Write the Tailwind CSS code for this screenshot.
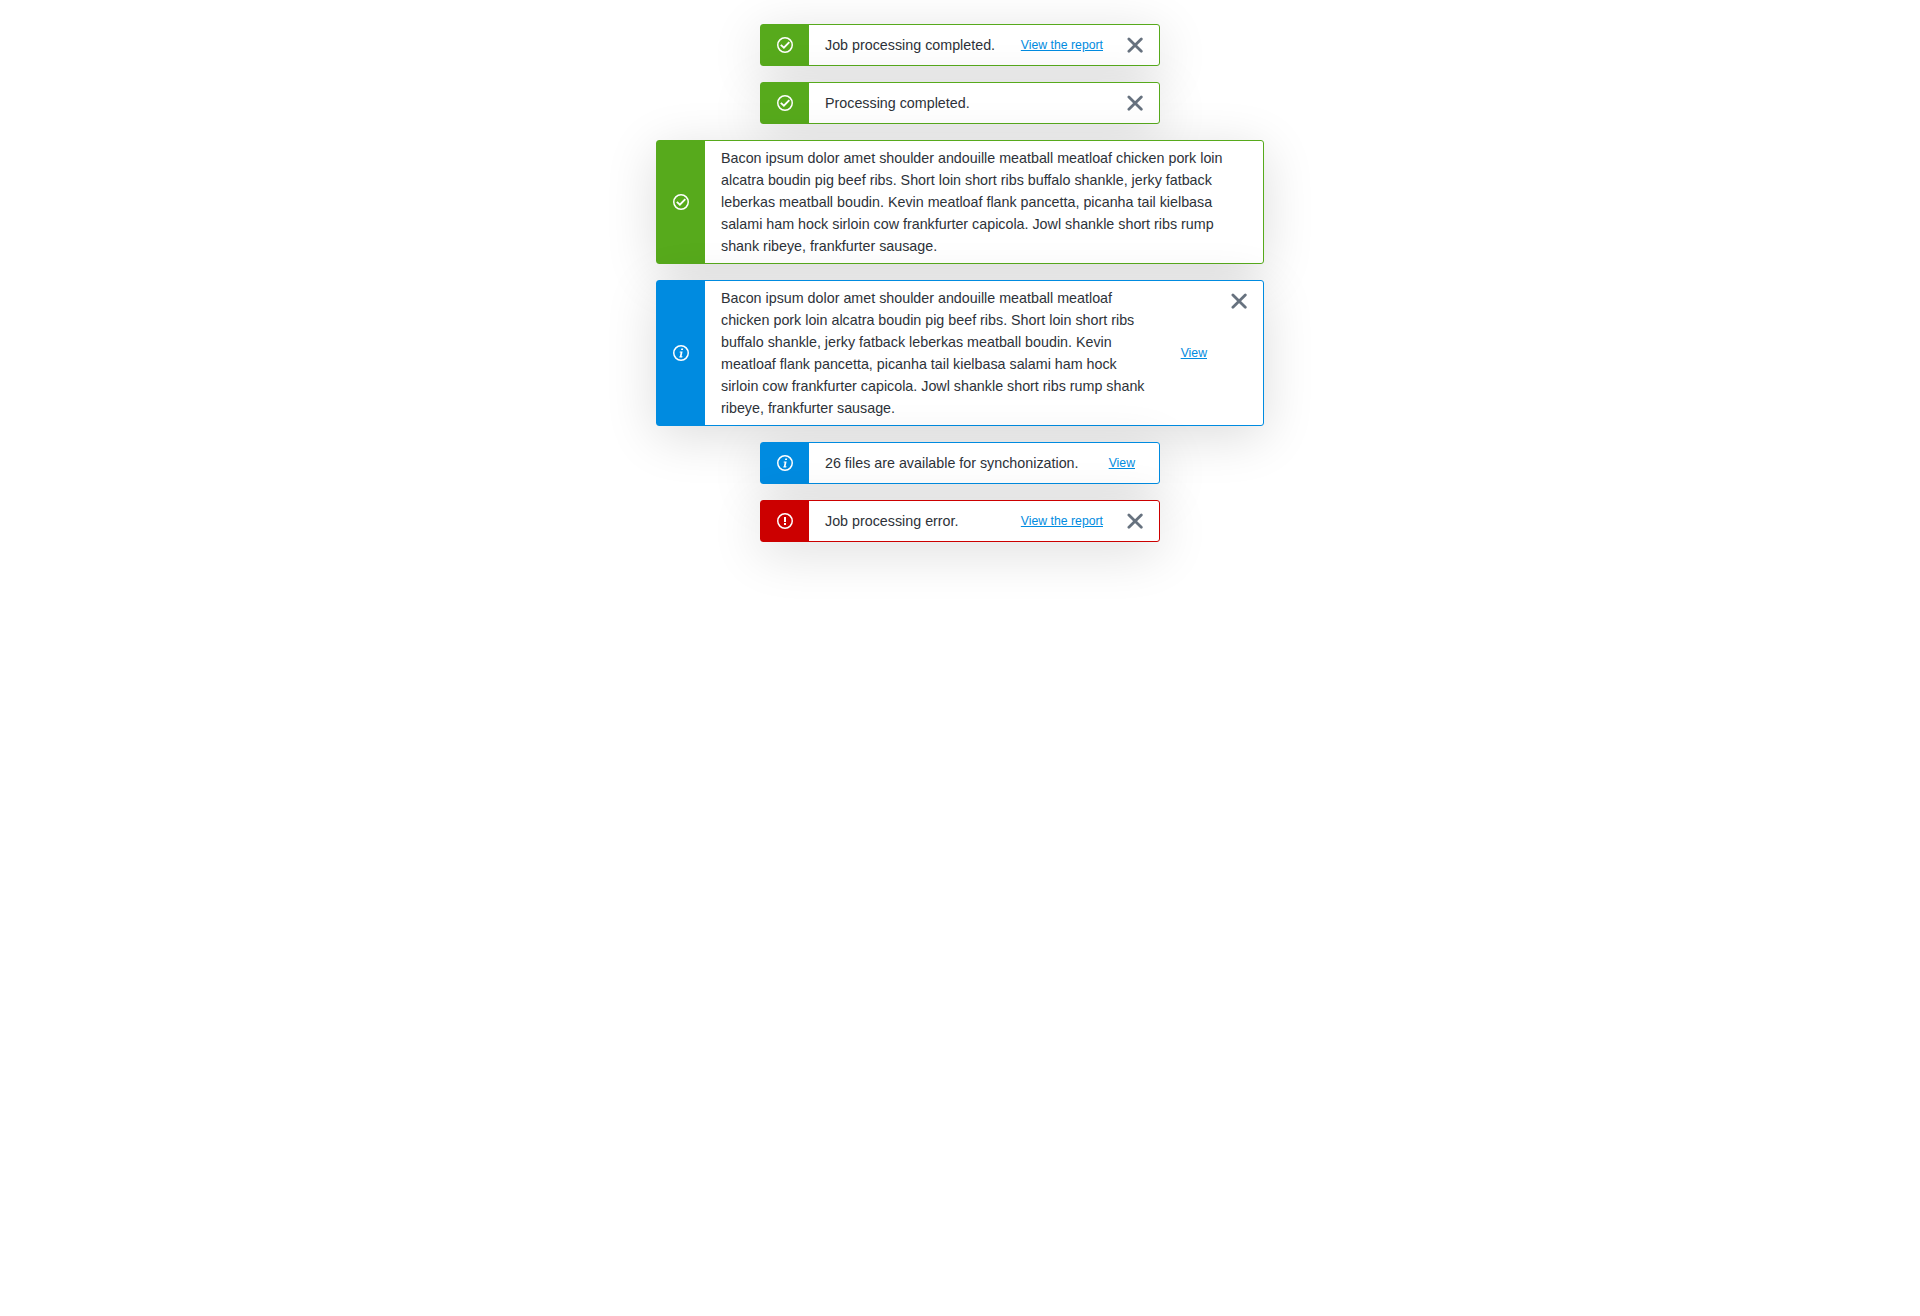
<!DOCTYPE html>
<html lang="en">
<head>
<meta charset="utf-8">
<title>Notifications</title>
<script src="https://cdn.jsdelivr.net/npm/@tailwindcss/browser@4"></script>
</head>
<body class="min-h-screen bg-white font-['Liberation_Sans',Arial,sans-serif] text-[14.3px] leading-[22px] text-[#2d3239]">
<svg class="hidden">
  <symbol id="check" viewBox="0 0 16 16"><circle cx="8" cy="8" r="7.25" fill="none" stroke="currentColor" stroke-width="1.5"/><path d="M3.8 7.9 6.9 10.7 12.3 5.2" fill="none" stroke="currentColor" stroke-width="1.9"/></symbol>
  <symbol id="info" viewBox="0 0 16 16"><circle cx="8" cy="8" r="7.25" fill="none" stroke="currentColor" stroke-width="1.5"/><path d="M8.3 3.4h1.9l-.3 1.6H8zM6.8 6.4h2.8l-1 4.9h.9l-.3 1.2H6.3l.2-1.2h.4l.7-3.7h-1z" fill="currentColor"/></symbol>
  <symbol id="error" viewBox="0 0 16 16"><circle cx="8" cy="8" r="7.25" fill="none" stroke="currentColor" stroke-width="1.5"/><path d="M7 4h2v5H7zM7 10h2v2H7z" fill="currentColor"/></symbol>
  <symbol id="close" viewBox="0 0 16 16"><path d="M1.9 1.9 14.3 14.3M14.3 1.9 1.9 14.3" fill="none" stroke="currentColor" stroke-width="2.8" stroke-linecap="round"/></symbol>
</svg>
<main class="flex flex-col items-center gap-4 pt-6">
  <section class="relative flex min-h-[42px] w-[400px] rounded-[3px] border border-[#57aa1c] bg-white shadow-[0_10px_52px_rgba(0,0,0,0.14)]">
    <div class="flex w-12 shrink-0 items-center justify-center bg-[#57aa1c] text-white"><svg class="size-4"><use href="#check"/></svg></div>
    <p class="grow self-center py-1.5 pl-4 pr-4">Job processing completed.</p>
    <a class="mr-6 shrink-0 self-center text-[12.25px] leading-4 text-[#008be0] underline">View the report</a>
    <button class="mr-4 mt-3 size-4 shrink-0 text-[#67727f]"><svg class="size-4"><use href="#close"/></svg></button>
  </section>
  <section class="relative flex min-h-[42px] w-[400px] rounded-[3px] border border-[#57aa1c] bg-white shadow-[0_10px_52px_rgba(0,0,0,0.14)]">
    <div class="flex w-12 shrink-0 items-center justify-center bg-[#57aa1c] text-white"><svg class="size-4"><use href="#check"/></svg></div>
    <p class="grow self-center py-1.5 pl-4 pr-4">Processing completed.</p>
    <button class="mr-4 mt-3 size-4 shrink-0 text-[#67727f]"><svg class="size-4"><use href="#close"/></svg></button>
  </section>
  <section class="relative flex min-h-[42px] w-[608px] rounded-[3px] border border-[#57aa1c] bg-white shadow-[0_10px_52px_rgba(0,0,0,0.14)]">
    <div class="flex w-12 shrink-0 items-center justify-center bg-[#57aa1c] text-white"><svg class="size-4"><use href="#check"/></svg></div>
    <p class="grow self-center py-1.5 pl-4 pr-4">Bacon ipsum dolor amet shoulder andouille meatball meatloaf chicken pork loin alcatra boudin pig beef ribs. Short loin short ribs buffalo shankle, jerky fatback leberkas meatball boudin. Kevin meatloaf flank pancetta, picanha tail kielbasa salami ham hock sirloin cow frankfurter capicola. Jowl shankle short ribs rump shank ribeye, frankfurter sausage.</p>
  </section>
  <section class="relative flex min-h-[42px] w-[608px] rounded-[3px] border border-[#008be0] bg-white shadow-[0_10px_52px_rgba(0,0,0,0.14)]">
    <div class="flex w-12 shrink-0 items-center justify-center bg-[#008be0] text-white"><svg class="size-4"><use href="#info"/></svg></div>
    <p class="grow self-center py-1.5 pl-4 pr-6">Bacon ipsum dolor amet shoulder andouille meatball meatloaf chicken pork loin alcatra boudin pig beef ribs. Short loin short ribs buffalo shankle, jerky fatback leberkas meatball boudin. Kevin meatloaf flank pancetta, picanha tail kielbasa salami ham hock sirloin cow frankfurter capicola. Jowl shankle short ribs rump shank ribeye, frankfurter sausage.</p>
    <a class="mr-6 shrink-0 self-center text-[12.25px] leading-4 text-[#008be0] underline">View</a>
    <button class="mr-4 mt-3 size-4 shrink-0 text-[#67727f]"><svg class="size-4"><use href="#close"/></svg></button>
  </section>
  <section class="relative flex min-h-[42px] w-[400px] rounded-[3px] border border-[#008be0] bg-white shadow-[0_10px_52px_rgba(0,0,0,0.14)]">
    <div class="flex w-12 shrink-0 items-center justify-center bg-[#008be0] text-white"><svg class="size-4"><use href="#info"/></svg></div>
    <p class="grow self-center py-1.5 pl-4 pr-4">26 files are available for synchonization.</p>
    <a class="mr-6 shrink-0 self-center text-[12.25px] leading-4 text-[#008be0] underline">View</a>
  </section>
  <section class="relative flex min-h-[42px] w-[400px] rounded-[3px] border border-[#cc0000] bg-white shadow-[0_10px_52px_rgba(0,0,0,0.14)]">
    <div class="flex w-12 shrink-0 items-center justify-center bg-[#cc0000] text-white"><svg class="size-4"><use href="#error"/></svg></div>
    <p class="grow self-center py-1.5 pl-4 pr-4">Job processing error.</p>
    <a class="mr-6 shrink-0 self-center text-[12.25px] leading-4 text-[#008be0] underline">View the report</a>
    <button class="mr-4 mt-3 size-4 shrink-0 text-[#67727f]"><svg class="size-4"><use href="#close"/></svg></button>
  </section>
</main>
</body>
</html>
